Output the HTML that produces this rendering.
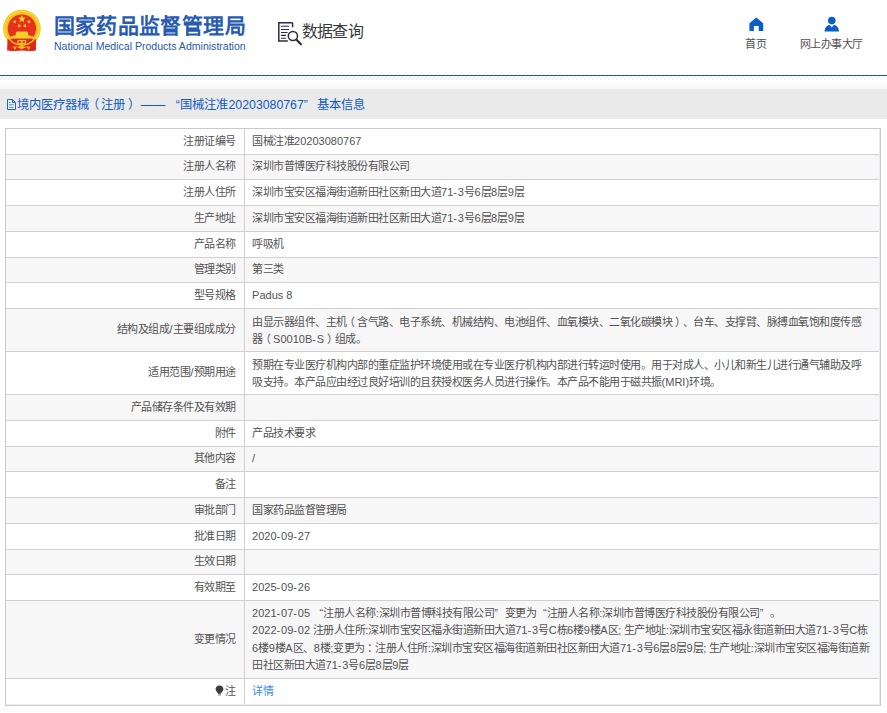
<!DOCTYPE html>
<html lang="zh-CN">
<head>
<meta charset="utf-8">
<title>国家药品监督管理局 数据查询</title>
<style>
*{box-sizing:border-box;margin:0;padding:0}
html,body{width:887px;height:713px;overflow:hidden;background:#fff}
body{position:relative;font-family:"Liberation Sans",sans-serif;font-size:11px;letter-spacing:calc(-0.5px + var(--k,0)*1em);color:#525252;line-height:17.2px;white-space:nowrap;text-spacing-trim:space-all}
.d{letter-spacing:0}
.h{letter-spacing:0.85px}
.pl{position:relative;left:-2.5px}
.pr{position:relative;left:2.5px}
.abs{position:absolute}
#emblem{position:absolute;left:2px;top:8px}
#cn{position:absolute;left:53.5px;top:12px;font-size:21px;line-height:28px;font-weight:bold;color:#275bb2;letter-spacing:calc(0.4px + var(--k,0)*1em)}
#en{position:absolute;left:54px;top:39px;font-size:10.55px;letter-spacing:0;line-height:14px;color:#2a5aa8}
#qicon{position:absolute;left:277px;top:21px}
#qtxt{position:absolute;left:301.5px;top:21px;font-size:16px;letter-spacing:calc(-0.6px + var(--k,0)*1em);line-height:22px;color:#3a3a3a}
.nav{position:absolute;top:36px;font-size:11px;line-height:16px;color:#505050;text-align:center}
#blue{position:absolute;left:0;top:75px;width:887px;height:1px;background:#0f5fc0}
#hatch{position:absolute;left:0;top:76px;width:887px;height:4px;background:repeating-linear-gradient(135deg,#fff 0,#fff 1.9px,#ececec 1.9px,#ececec 2.83px)}
#fade{position:absolute;left:0;top:81px;width:887px;height:8px;background:linear-gradient(#fff,#f6f6f6)}
#bar{position:absolute;left:0;top:89px;width:887px;height:30px;background:#eaeaea;color:#0f5bc4;font-size:12.3px;letter-spacing:calc(var(--k,0)*1em - var(--j,0)*0.3px);line-height:30px}
#bar svg{position:absolute;left:7px;top:10px}
#bar span.t{position:absolute;left:17.3px;top:1.4px}
.q{display:inline-block;width:10.5px;letter-spacing:0}
#bar .q{width:12px}
.ql{text-align:right}
.qr{text-align:left}
#tb{position:absolute;left:5px;top:128px;width:876px;height:578px;border:1px solid #cbcaca}
.r{position:absolute;left:6px;width:873px;background:#fff}
.r.g{background:#f7f7f7}
.l{position:absolute;left:0;top:0;width:238px;height:100%;text-align:right;padding-right:8.5px}
.v{position:absolute;left:239px;top:0;height:100%;padding-left:7.1px}
.hl{position:absolute;left:6px;width:874px;height:1px;background:#d2d0d0}
#vl{position:absolute;left:244px;top:129px;width:1px;height:575px;background:#d2d0d0}
#lb{position:absolute;left:6px;top:704px;width:874px;height:1px;background:#e9ecf5}
#lr{position:absolute;left:879px;top:129px;width:1px;height:576px;background:#e9ecf5}
a{color:#3a8bee}
.bulb{vertical-align:-1.5px;margin-right:1px}
</style>
</head>
<body>
<svg id="emblem" width="42" height="47" viewBox="2 8 42 47">
<circle cx="21.9" cy="28.6" r="18.85" fill="#f4c41d"/>
<circle cx="21.9" cy="28.6" r="17.2" fill="none" stroke="#f9d93a" stroke-width="1.2"/>
<circle cx="21.9" cy="28.6" r="14.2" fill="#e8301f"/>
<path d="M7.5 39.2 L33 39 L36.1 39.2 L35.9 50.4 Q29 51.6 21.9 50.6 Q14.5 51.6 7.1 50.4 Z" fill="#e3261b"/>
<path d="M8.9 38.6 A16.4 16.4 0 0 0 34.9 38.6" fill="none" stroke="#f6cb24" stroke-width="1.3"/>
<path d="M16.9 31.5H27.1L27.8 32.8H28.2V35.5H30.9V36.3H33.2V38.4H10.7V36.3H13V35.5H15.7V32.8H16.1Z" fill="#f7cf2a"/>
<ellipse cx="19.9" cy="42.1" rx="2.2" ry="1.7" fill="none" stroke="#f6cb24" stroke-width="1.1"/>
<ellipse cx="23.6" cy="42.1" rx="2.2" ry="1.7" fill="none" stroke="#f6cb24" stroke-width="1.1"/>
<path d="M21.7 45.2L25.6 47.3L21.7 49.2L17.8 47.3Z" fill="#f6cb24"/>
<path d="M13.1 46.4L16.4 47.2L14.6 50.2ZM30.2 46.4L26.9 47.2L28.7 50.2Z" fill="#f6cb24"/>
<path d="M14 47h15.5" stroke="#f0a91c" stroke-width="0.8"/>
<polygon points="21.90,15.10 22.93,17.58 25.61,17.79 23.56,19.54 24.19,22.16 21.90,20.75 19.61,22.16 20.24,19.54 18.19,17.79 20.87,17.58" fill="#f8d431"/>
<circle cx="14.8" cy="21.8" r="1.35" fill="#f8d431"/><circle cx="29" cy="21.8" r="1.35" fill="#f8d431"/>
<circle cx="19.2" cy="25.9" r="1.35" fill="#f8d431"/><circle cx="24.9" cy="25.9" r="1.35" fill="#f8d431"/>
</svg>
<div id="cn">国家药品监督管理局</div>
<div id="en">National Medical Products Administration</div>
<svg id="qicon" width="26" height="26" viewBox="0 0 26 26">
<path d="M15.6 1.8H1.8v18.2h9" fill="none" stroke="#2b2b45" stroke-width="1.5"/>
<path d="M15.6 1.8v4.5" fill="none" stroke="#2b2b45" stroke-width="1.5"/>
<path d="M4 5.3h8M4 8.5h8M4 11.5h6.5M4 14.4h5M4 17.3h5" stroke="#2b2b45" stroke-width="1.1"/>
<circle cx="15.9" cy="15" r="4.6" fill="#fff" stroke="#2b2b45" stroke-width="1.5"/>
<path d="M19.3 18.6l4.6 4.7" stroke="#2b2b45" stroke-width="2.2" stroke-linecap="round"/>
</svg>
<div id="qtxt">数据查询</div>
<svg class="abs" style="left:749px;top:17px" width="15" height="15" viewBox="0 0 15 15"><path d="M7.3 0.6L0.4 6.2V14H4.9V8.9H9.7V14H14.2V6.2Z" fill="#0b5fc4"/></svg>
<div class="nav" style="left:735.3px;width:41px">首页</div>
<svg class="abs" style="left:824px;top:16px" width="16" height="16" viewBox="0 0 16 16"><circle cx="7.8" cy="4.6" r="3.8" fill="#0b5fc4"/><path d="M0.5 15.6C0.8 11.5 3 9.2 5.6 8.8L7.8 11.6 10 8.8C12.6 9.2 14.8 11.5 15.1 15.6Z" fill="#0b5fc4"/></svg>
<div class="nav" style="left:791.4px;width:80px">网上办事大厅</div>
<div id="blue"></div><div id="hatch"></div><div id="fade"></div>
<div id="bar"><svg width="9" height="11" viewBox="0 0 9 11"><path d="M0.5 0.5H5.4L8.5 3.6V10.5H0.5Z" fill="#f4f4f6" stroke="#1f62c8" stroke-width="1"/><path d="M5.4 0.5V3.6H8.5" fill="none" stroke="#1f62c8" stroke-width="1"/><path d="M2 3.6h1.6M2 5.8h4.6M2 8.3h4.6" stroke="#4a78d0" stroke-width="0.9"/></svg><span class="t">境内医疗器械<span class="pl">（</span>注册<span class="pr">）</span> —— <span class="q ql" style="margin-left:-1px">“</span>国械注准<span class="d" style="margin-left:0.8px">20203080767</span><span class="q qr">”</span> <span style="margin-left:-2.6px">基本信息</span></span></div>
<div id="tb"></div>
<div class="r" style="top:129px;height:25px"><div class="l" style="padding-top:3.90px">注册证编号</div><div class="v" style="padding-top:3.90px">国械注准<span class="d">20203080767</span></div></div>
<div class="r g" style="top:155px;height:24px"><div class="l" style="padding-top:3.40px">注册人名称</div><div class="v" style="padding-top:3.40px">深圳市普博医疗科技股份有限公司</div></div>
<div class="r" style="top:180px;height:25px"><div class="l" style="padding-top:3.90px">注册人住所</div><div class="v" style="padding-top:3.90px">深圳市宝安区福海街道新田社区新田大道<span class="d">71<span class="h">-</span>3</span>号<span class="d">6</span>层<span class="d">8</span>层<span class="d">9</span>层</div></div>
<div class="r g" style="top:206px;height:25px"><div class="l" style="padding-top:3.90px">生产地址</div><div class="v" style="padding-top:3.90px">深圳市宝安区福海街道新田社区新田大道<span class="d">71<span class="h">-</span>3</span>号<span class="d">6</span>层<span class="d">8</span>层<span class="d">9</span>层</div></div>
<div class="r" style="top:232px;height:25px"><div class="l" style="padding-top:3.90px">产品名称</div><div class="v" style="padding-top:3.90px">呼吸机</div></div>
<div class="r g" style="top:258px;height:24px"><div class="l" style="padding-top:3.40px">管理类别</div><div class="v" style="padding-top:3.40px">第三类</div></div>
<div class="r" style="top:283px;height:25px"><div class="l" style="padding-top:3.90px">型号规格</div><div class="v" style="padding-top:3.90px"><span class="d">Padus 8</span></div></div>
<div class="r g" style="top:309px;height:42px"><div class="l" style="padding-top:12.40px">结构及组成<span class="d">/</span>主要组成成分</div><div class="v" style="padding-top:4.60px">由显示器组件、主机<span class="pl">（</span>含气路、电子系统、机械结构、电池组件、血氧模块、二氧化碳模块<span class="pr">）</span>、台车、支撑臂、脉搏血氧饱和度传感<br>器<span class="pl">（</span><span class="d">S0010B<span class="h">-</span>S</span><span class="pr">）</span>组成。</div></div>
<div class="r" style="top:352px;height:42px"><div class="l" style="padding-top:12.40px">适用范围<span class="d">/</span>预期用途</div><div class="v" style="padding-top:4.60px">预期在专业医疗机构内部的重症监护环境使用或在专业医疗机构内部进行转运时使用。用于对成人、小儿和新生儿进行通气辅助及呼<br>吸支持。本产品应由经过良好培训的且获授权医务人员进行操作。本产品不能用于磁共振<span class="d">(MRI)</span>环境。</div></div>
<div class="r g" style="top:395px;height:25px"><div class="l" style="padding-top:3.90px">产品储存条件及有效期</div><div class="v" style="padding-top:3.90px"></div></div>
<div class="r" style="top:421px;height:25px"><div class="l" style="padding-top:3.90px">附件</div><div class="v" style="padding-top:3.90px">产品技术要求</div></div>
<div class="r g" style="top:447px;height:24px"><div class="l" style="padding-top:3.40px">其他内容</div><div class="v" style="padding-top:3.40px"><span class="d">/</span></div></div>
<div class="r" style="top:472px;height:25px"><div class="l" style="padding-top:3.90px">备注</div><div class="v" style="padding-top:3.90px"></div></div>
<div class="r g" style="top:498px;height:25px"><div class="l" style="padding-top:3.90px">审批部门</div><div class="v" style="padding-top:3.90px">国家药品监督管理局</div></div>
<div class="r" style="top:524px;height:25px"><div class="l" style="padding-top:3.90px">批准日期</div><div class="v" style="padding-top:3.90px"><span class="d">2020<span class="h">-</span>09<span class="h">-</span>27</span></div></div>
<div class="r g" style="top:550px;height:24px"><div class="l" style="padding-top:3.40px">生效日期</div><div class="v" style="padding-top:3.40px"></div></div>
<div class="r" style="top:575px;height:25px"><div class="l" style="padding-top:3.90px">有效期至</div><div class="v" style="padding-top:3.90px"><span class="d">2025<span class="h">-</span>09<span class="h">-</span>26</span></div></div>
<div class="r g" style="top:601px;height:77px"><div class="l" style="padding-top:29.90px">变更情况</div><div class="v" style="padding-top:4.10px"><span class="d">2021<span class="h">-</span>07<span class="h">-</span>05</span> <span class="q ql">“</span>注册人名称<span class="d">:</span>深圳市普博科技有限公司<span class="q qr">”</span>变更为<span class="q ql">“</span>注册人名称<span class="d">:</span>深圳市普博医疗科技股份有限公司<span class="q qr">”</span>。<br><span class="d">2022<span class="h">-</span>09<span class="h">-</span>02</span> 注册人住所<span class="d">:</span>深圳市宝安区福永街道新田大道<span class="d">71<span class="h">-</span>3</span>号<span class="d">C</span>栋<span class="d">6</span>楼<span class="d">9</span>楼<span class="d">A</span>区<span class="d">;</span> 生产地址<span class="d">:</span>深圳市宝安区福永街道新田大道<span class="d">71<span class="h">-</span>3</span>号<span class="d">C</span>栋<br><span class="d">6</span>楼<span class="d">9</span>楼<span class="d">A</span>区、<span class="d">8</span>楼<span class="d">;</span>变更为<span class="pr">：</span>注册人住所<span class="d">:</span>深圳市宝安区福海街道新田社区新田大道<span class="d">71<span class="h">-</span>3</span>号<span class="d">6</span>层<span class="d">8</span>层<span class="d">9</span>层<span class="d">;</span> 生产地址<span class="d">:</span>深圳市宝安区福海街道新<br>田社区新田大道<span class="d">71<span class="h">-</span>3</span>号<span class="d">6</span>层<span class="d">8</span>层<span class="d">9</span>层</div></div>
<div class="r" style="top:679px;height:25px"><div class="l" style="padding-top:3.90px"><svg class="bulb" width="9" height="11" viewBox="0 0 9 11"><path d="M4.5 0.4C2.2 0.4 0.6 2 0.6 4.1c0 1.4 0.8 2.4 1.6 3.1 0.5 0.5 0.8 1 0.8 1.6h3c0-0.6 0.3-1.1 0.8-1.6 0.8-0.7 1.6-1.7 1.6-3.1C8.4 2 6.8 0.4 4.5 0.4z" fill="#3c3c3c"/><rect x="3" y="9.3" width="3" height="1.2" fill="#8a8a8a"/></svg>注</div><div class="v" style="padding-top:3.90px"><a>详情</a></div></div>
<i class="hl" style="top:154px"></i>
<i class="hl" style="top:179px"></i>
<i class="hl" style="top:205px"></i>
<i class="hl" style="top:231px"></i>
<i class="hl" style="top:257px"></i>
<i class="hl" style="top:282px"></i>
<i class="hl" style="top:308px"></i>
<i class="hl" style="top:351px"></i>
<i class="hl" style="top:394px"></i>
<i class="hl" style="top:420px"></i>
<i class="hl" style="top:446px"></i>
<i class="hl" style="top:471px"></i>
<i class="hl" style="top:497px"></i>
<i class="hl" style="top:523px"></i>
<i class="hl" style="top:549px"></i>
<i class="hl" style="top:574px"></i>
<i class="hl" style="top:600px"></i>
<i class="hl" style="top:678px"></i>
<div id="vl"></div><div id="lb"></div><div id="lr"></div>
<script>
(function(){try{var s=document.createElement('span');s.style.cssText='position:absolute;left:0;top:0;visibility:hidden;font-size:20px;letter-spacing:0;white-space:nowrap';s.textContent='\u56fd\u5bb6\u836f\u54c1\u76d1\u7763\u7ba1\u7406\u5c40\u6570';document.body.appendChild(s);var w=s.getBoundingClientRect().width/10;document.body.removeChild(s);if(w>4&&w<18.5){var r=document.documentElement.style;r.setProperty('--k',(1-w/20).toFixed(4));r.setProperty('--j','1');}}catch(e){}})();
</script>
</body>
</html>
